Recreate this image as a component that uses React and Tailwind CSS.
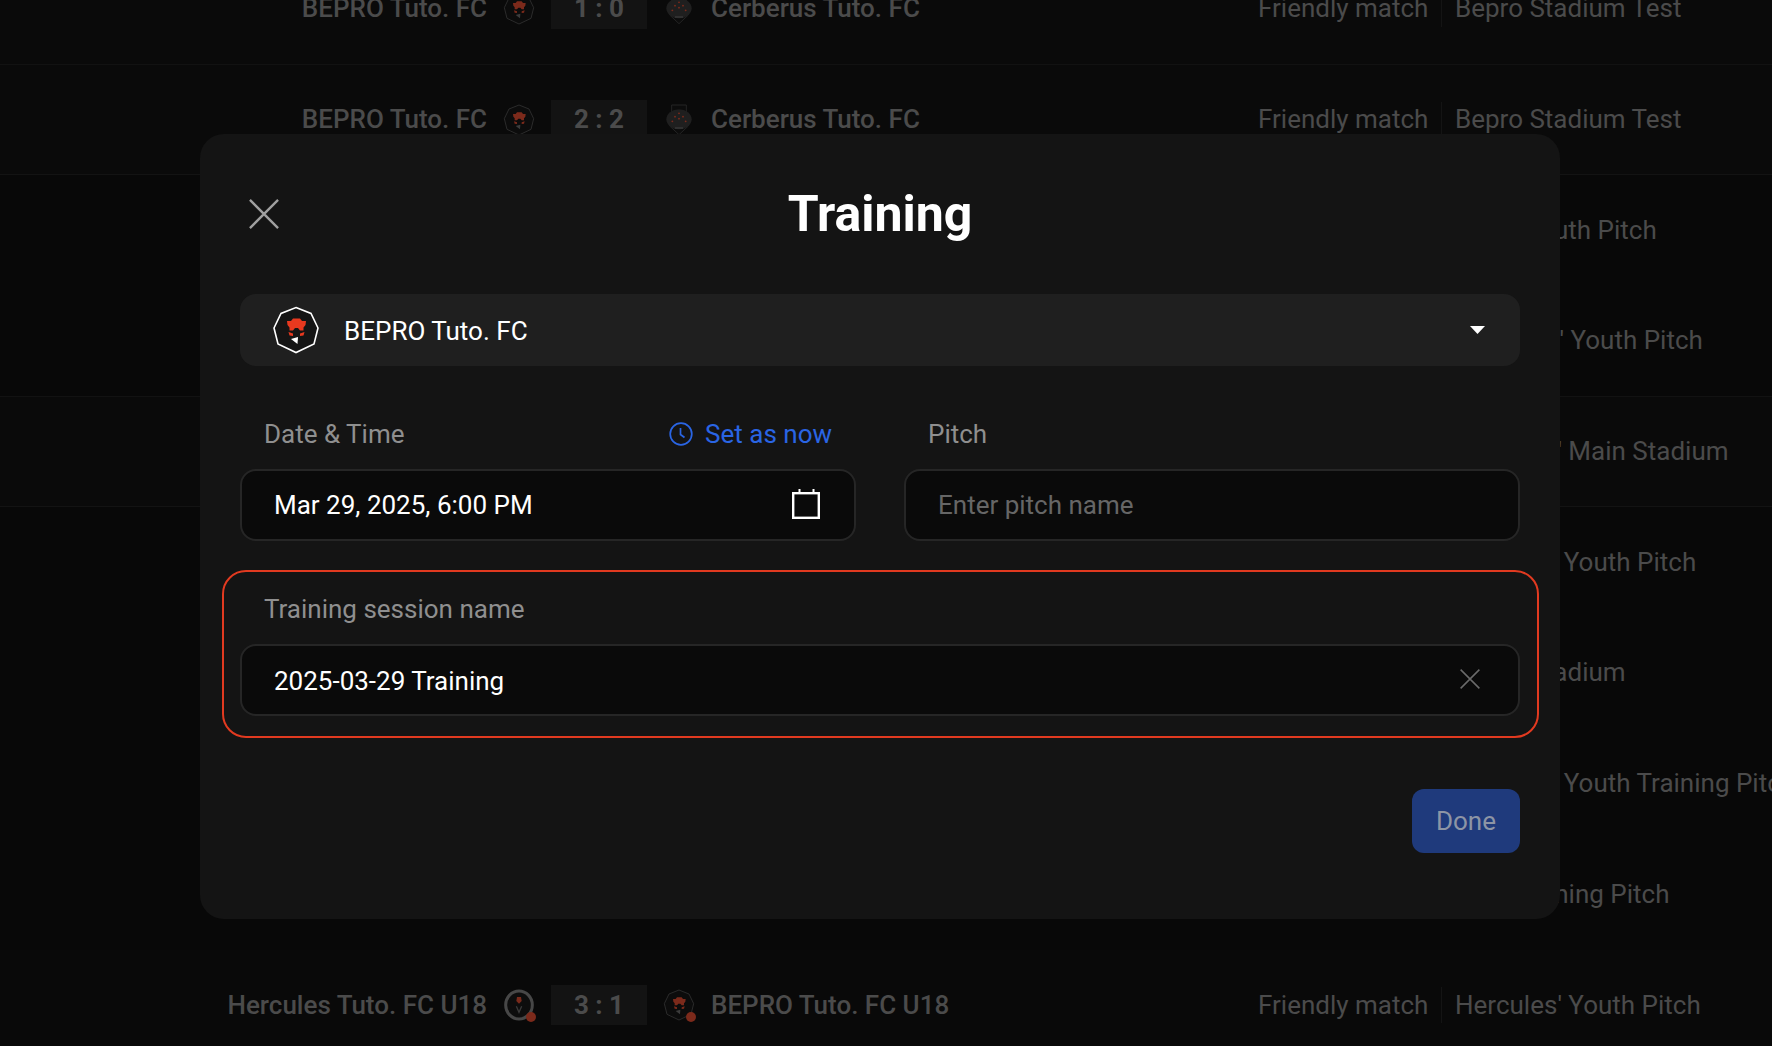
import React from "react";

const rows = [
  { home: "BEPRO Tuto. FC", score: "1 : 0", away: "Cerberus Tuto. FC", type: "Friendly match", pitch: "Bepro Stadium Test", homeLogo: "bepro", awayLogo: "cerberus", shade: "bg-[#0a0a0a] border-[#121212]" },
  { home: "BEPRO Tuto. FC", score: "2 : 2", away: "Cerberus Tuto. FC", type: "Friendly match", pitch: "Bepro Stadium Test", homeLogo: "bepro", awayLogo: "cerberus", shade: "bg-[#0a0a0a] border-[#131313]" },
  { pitch: "Lions Youth Pitch", shade: "bg-[#080808] border-[#080808]" },
  { pitch: "Cerberus' Youth Pitch", shade: "bg-[#080808] border-[#121212]" },
  { pitch: "Hercules' Main Stadium", shade: "bg-[#0a0a0a] border-[#131313]" },
  { pitch: "Hercules Youth Pitch", shade: "bg-[#080808] border-[#080808]" },
  { pitch: "Bepro Stadium", shade: "bg-[#080808] border-[#080808]" },
  { pitch: "Hercules Youth Training Pitch", shade: "bg-[#080808] border-[#080808]" },
  { pitch: "Test Training Pitch", shade: "bg-[#080808] border-[#080808]" },
  { home: "Hercules Tuto. FC U18", score: "3 : 1", away: "BEPRO Tuto. FC U18", type: "Friendly match", pitch: "Hercules' Youth Pitch", homeLogo: "hercules", awayLogo: "bepro", badge: true, shade: "bg-[#090909] border-[#090909]" },
];

// octagon lion mark, the stroke colour comes from the parent
const BeproLogo = ({ className, head = "#e8391f", nose = "#fff", fill = "#151515", stroke = 1.6 }) => (
  <svg viewBox="0 0 48 48" className={className}>
    <path d="M24 1.5 39 7.5 46 22 42 38 24 46.5 6 38 2 22 9 7.5Z" fill={fill} stroke="currentColor" strokeWidth={stroke} />
    <path d="M15 15 19 15 21 12.5 28 12.5 30 15 34 15 33.5 19 31.5 21.5 31.5 24.5 28 24.5 26 22 23 22 21 24.5 17.5 24.5 17.5 21.5 15.5 19Z" fill={head} />
    <path d="M16.5 26 21 27.5 21 30 17.5 29.5ZM32.5 26 28 27.5 28 30 31.5 29.5Z" fill={head} />
    <path d="M19 33 26 31 25.5 38Z" fill={nose} />
  </svg>
);

const CerberusLogo = ({ className }) => (
  <svg viewBox="0 0 48 48" className={className}>
    <path d="M13 1.5H35V14L40 22 38 33 24 46 10 33 8 22 13 14Z" fill="#0c0c0c" stroke="#242424" strokeWidth="1.5" />
    <ellipse cx="24" cy="23" rx="19" ry="15" fill="#1f1f1f" />
    <circle cx="24" cy="14" r="1.4" fill="#7c2a1b" />
    <circle cx="18" cy="19" r="1.4" fill="#7c2a1b" />
    <circle cx="30" cy="19" r="1.4" fill="#7c2a1b" />
    <circle cx="24" cy="22" r="1.4" fill="#7c2a1b" />
    <circle cx="14" cy="26" r="1.4" fill="#7c2a1b" />
    <circle cx="34" cy="26" r="1.4" fill="#7c2a1b" />
    <path d="M18 36h12" stroke="#3a3a3a" strokeWidth="2" />
  </svg>
);

const HerculesLogo = ({ className }) => (
  <svg viewBox="0 0 48 48" className={className}>
    <ellipse cx="24" cy="24" rx="20" ry="21" fill="#0d0d0d" stroke="#474747" strokeWidth="4.5" />
    <path d="M21 12h6l1 6-4 4-4-4Z" fill="#7a2a1b" />
    <path d="M20 26l4 9 4-9" fill="none" stroke="#3a3a3a" strokeWidth="2" />
  </svg>
);

const TeamLogo = ({ kind, badge }) => (
  <span className="relative flex w-[33px] h-[33px] items-center justify-center shrink-0">
    {kind === "bepro" && <BeproLogo className="w-[32px] h-[32px] text-[#333333]" head="#7c2a1b" nose="#3c3c3c" fill="#0c0c0c" stroke={1.2} />}
    {kind === "cerberus" && <CerberusLogo className="w-[32px] h-[32px]" />}
    {kind === "hercules" && <HerculesLogo className="w-[32px] h-[32px]" />}
    {badge && <span className="absolute right-0 bottom-0 w-[10px] h-[10px] rounded-full bg-[#7c2a1b]" />}
  </span>
);

const MatchRow = ({ row }) => (
  <div className={`h-[110.7px] shrink-0 flex items-center border-b text-[#4b4b4b] text-[26px] ${row.shade}`}>
    <div className="w-[487px] shrink-0 text-right font-medium truncate">{row.home}</div>
    <div className="w-[64px] shrink-0 flex justify-center">{row.homeLogo && <TeamLogo kind={row.homeLogo} badge={row.badge} />}</div>
    <div className="w-[96px] shrink-0 flex justify-center">
      {row.score && <span className="w-full h-[40px] flex items-center justify-center bg-[#131313] font-bold">{row.score}</span>}
    </div>
    <div className="w-[64px] shrink-0 flex justify-center">{row.awayLogo && <TeamLogo kind={row.awayLogo} badge={row.badge} />}</div>
    <div className="w-[547px] shrink-0 font-medium">{row.away}</div>
    <div className="w-[170px] shrink-0 text-right whitespace-nowrap">{row.type}</div>
    <div className="w-[1px] h-[36px] mx-[13px] shrink-0 bg-[#141414]" />
    <div className="whitespace-nowrap">{row.pitch}</div>
  </div>
);

const CloseIcon = ({ className }) => (
  <svg viewBox="0 0 32 32" fill="none" stroke="currentColor" strokeWidth="2.5" className={className}>
    <path d="M1 1 31 31M31 1 1 31" />
  </svg>
);

const ClockIcon = () => (
  <svg viewBox="0 0 24 24" fill="none" stroke="currentColor" strokeWidth="1.7" className="w-[24px] h-[24px] -ml-[1px]">
    <circle cx="12" cy="12" r="10.8" />
    <path d="M11.5 6V12.5L15.5 15.5" />
  </svg>
);

const CalendarIcon = () => (
  <svg viewBox="0 0 28 30" fill="none" stroke="#fff" className="w-[28px] h-[30px]">
    <rect x="1.2" y="4.2" width="25.6" height="24.6" strokeWidth="2.4" />
    <path d="M7.5 0V4M21.5 0V4" strokeWidth="2" />
  </svg>
);

const fieldClass = "h-[72px] flex items-center px-[32px] rounded-[16px] bg-[#0a0a0a] border-2 border-[#262626] text-[26px]";

export default function App() {
  return (
    <div className="relative w-[1772px] h-[1046px] overflow-hidden bg-[#080808] font-['Roboto',sans-serif]">
      {/* match list behind the dialog */}
      <div className="flex flex-col -mt-[46px]">
        {rows.map((row, i) => (
          <MatchRow key={i} row={row} />
        ))}
      </div>

      {/* dialog */}
      <div className="absolute inset-0 flex items-start pl-[200px] pt-[134px]">
        <div className="w-[1360px] rounded-[24px] bg-[#141414] px-[40px] pt-[40px] pb-[66px]">
          <div className="relative h-[80px] flex items-center justify-center mb-[40px]">
            <CloseIcon className="absolute left-[8px] top-[25px] w-[32px] h-[30px] text-[#a0a0a0]" />
            <h1 className="text-[50px] leading-none font-bold text-white">Training</h1>
          </div>

          <div className="h-[72px] flex items-center pl-[32px] pr-[35px] rounded-[16px] bg-[#1f1f1f]">
            <BeproLogo className="w-[48px] h-[48px] text-white" />
            <span className="ml-[24px] pt-[2px] text-[26px] text-white">BEPRO Tuto. FC</span>
            <svg viewBox="0 0 15 8" className="ml-auto w-[15px] h-[8px]">
              <path d="M0 0H15L7.5 8Z" fill="#fff" />
            </svg>
          </div>

          <div className="grid grid-cols-2 gap-x-[48px] mt-[49px]">
            <div>
              <div className="h-[36px] mb-[18px] px-[24px] pt-[2px] flex items-center justify-between text-[26px]">
                <span className="text-[#8f8f8f]">Date &amp; Time</span>
                <span className="flex items-center gap-[12px] text-[#2a65e4]">
                  <ClockIcon />
                  Set as now
                </span>
              </div>
              <div className={`${fieldClass} justify-between text-white`}>
                <span className="pt-[1px]">Mar 29, 2025, 6:00 PM</span>
                <span className="mr-[2px] -mt-[2px] flex"><CalendarIcon /></span>
              </div>
            </div>
            <div>
              <div className="h-[36px] mb-[18px] px-[24px] pt-[2px] flex items-center text-[26px] text-[#8f8f8f]">Pitch</div>
              <div className={`${fieldClass} text-[#666666]`}><span className="pt-[1px]">Enter pitch name</span></div>
            </div>
          </div>

          <div className="-ml-[18px] -mr-[19px] mt-[29px] h-[168px] pl-[16px] pr-[17px] pt-[18px] rounded-[24px] border-2 border-[#e23a20]">
            <div className="h-[36px] mb-[18px] px-[24px] pt-[2px] flex items-center text-[26px] text-[#8f8f8f]">Training session name</div>
            <div className={`${fieldClass} justify-between text-white`}>
              <span className="pt-[2px]">2025-03-29 Training</span>
              <CloseIcon className="w-[20px] h-[20px] mr-[6px] -mt-[2px] text-[#6a6a6a]" />
            </div>
          </div>

          <div className="flex justify-end mt-[51px]">
            <button className="w-[108px] h-[64px] pt-[1px] rounded-[12px] bg-[#1f3a7c] text-[26px] text-[#8d95a5]">Done</button>
          </div>
        </div>
      </div>
    </div>
  );
}
